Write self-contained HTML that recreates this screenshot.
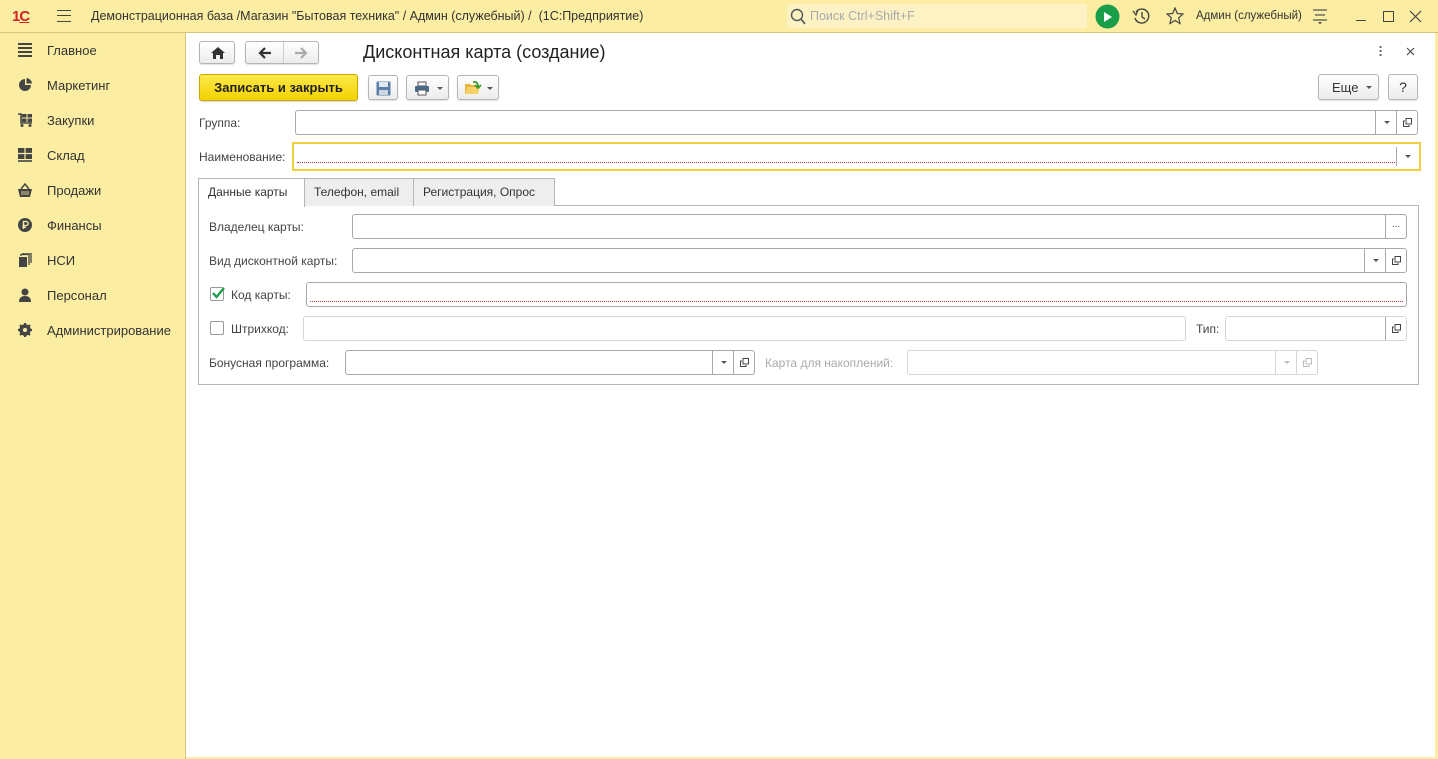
<!DOCTYPE html>
<html><head><meta charset="utf-8">
<style>
*{box-sizing:border-box;margin:0;padding:0}
body{width:1438px;height:759px;overflow:hidden;background:#fff;font-family:"Liberation Sans",Arial,sans-serif;font-size:12px;color:#333;position:relative}
.a{position:absolute}
#top{left:0;top:0;width:1438px;height:33px;background:#fbeda2;border-bottom:1px solid #d8c67c}
#side{left:0;top:33px;width:186px;height:726px;background:#fbeda2;border-right:1px solid #d8c67c}
#rb{left:1435px;top:33px;width:3px;height:726px;background:#fbeda2}
#bb{left:186px;top:757px;width:1252px;height:2px;background:#fbeda2}
.si{position:absolute;left:47px;font-size:13px;color:#333}
.ic{position:absolute;left:18px;width:15px;height:14px}
.btn{position:absolute;border:1px solid #b5b5b5;border-radius:3px;background:linear-gradient(#fff,#ececec);box-shadow:0 1px 1px rgba(0,0,0,.12)}
.fld{position:absolute;border:1px solid #a9a9a9;border-radius:3px;background:#fff}
.fld.dis{border-color:#d5d5d5}
.lbl{position:absolute;font-size:12px;color:#444}
.sb{position:absolute;top:0;bottom:0;border-left:1px solid #a9a9a9;width:21px}
.dis .sb{border-color:#d5d5d5}
.tri{position:absolute;left:8px;top:10px;border-left:3px solid transparent;border-right:3px solid transparent;border-top:3px solid #555}
.cp{position:absolute;left:6px;top:7px;width:9px;height:9px}
.tab{position:absolute;top:178px;height:28px;border:1px solid #b5b5b5;border-bottom:none;background:#eee;font-size:12px;color:#333;padding:6px 9px 0}
.dot{position:absolute;left:3px;right:10px;bottom:5px;border-bottom:1px dotted #a33}
</style></head><body>
<div id="top" class="a"></div>
<div class="a" style="left:12px;top:8px;font:bold 15px 'Liberation Sans';color:#d2232a;letter-spacing:-1px">1<span style="text-decoration:underline">С</span></div>
<div class="a" style="left:57px;top:10px;width:14px;height:12px;border-top:1.5px solid #444;border-bottom:1.5px solid #444"><div style="margin-top:3.5px;border-top:1.5px solid #444"></div></div>
<div class="a" style="left:91px;top:9px;font-size:12.5px;color:#333">Демонстрационная база /Магазин "Бытовая техника" / Админ (служебный) /&nbsp; (1С:Предприятие)</div>
<div class="a" style="left:787px;top:4px;width:300px;height:24px;background:#fcf2c4;border-radius:2px"></div>
<svg class="a" style="left:790px;top:8px" width="16" height="17"><circle cx="7" cy="7" r="5.5" fill="none" stroke="#555" stroke-width="1.4"/><line x1="11" y1="11" x2="15" y2="16" stroke="#555" stroke-width="1.6"/></svg>
<div class="a" style="left:810px;top:9px;font-size:12.5px;color:#aaa">Поиск Ctrl+Shift+F</div>
<svg class="a" style="left:1095px;top:4px" width="25" height="25"><circle cx="12.5" cy="12.5" r="12" fill="#1a9e4a"/><path d="M9 18 L9 8 L17 13 Z" fill="#fff"/></svg>
<svg class="a" style="left:1132px;top:7px" width="18" height="18"><path d="M4 5 A7 7 0 1 1 3 11" fill="none" stroke="#444" stroke-width="1.4"/><path d="M1 4 L4 8 L6 3" fill="none" stroke="#444" stroke-width="1.3"/><path d="M10 5 V10 L13 12" fill="none" stroke="#444" stroke-width="1.4"/></svg>
<svg class="a" style="left:1166px;top:7px" width="18" height="18"><path d="M9 1 L11.3 6.5 L17 7 L12.7 10.8 L14 16.5 L9 13.5 L4 16.5 L5.3 10.8 L1 7 L6.7 6.5 Z" fill="none" stroke="#444" stroke-width="1.2"/></svg>
<div class="a" style="left:1196px;top:10px;font-size:11.5px;color:#333">Админ (служебный)</div>
<svg class="a" style="left:1312px;top:9px" width="16" height="16"><path d="M1 1H15M3 6H13M1 11H15" stroke="#555" stroke-width="1.3"/><path d="M6 13 L10 13 L8 15.5Z" fill="#555"/></svg>
<div class="a" style="left:1356px;top:20px;width:10px;border-top:1.3px solid #444"></div>
<div class="a" style="left:1383px;top:11px;width:11px;height:11px;border:1.4px solid #444"></div>
<svg class="a" style="left:1409px;top:10px" width="13" height="13"><path d="M1 1L12 12M12 1L1 12" stroke="#444" stroke-width="1.2"/></svg>

<div id="side" class="a"></div>
<div id="rb" class="a"></div><div id="bb" class="a"></div>
<!-- sidebar icons -->
<svg class="ic" style="top:43px"><path d="M0 1H14M0 5H14M0 9H14M0 13H14" stroke="#444" stroke-width="2"/></svg>
<svg class="ic" style="top:78px"><path d="M7 1 A6 6 0 1 0 13 7 L7 7Z" fill="#444"/><path d="M8.5 0 A6 6 0 0 1 14 5.5 L8.5 5.5Z" fill="#444"/></svg>
<svg class="ic" style="top:113px"><path d="M0 1H3V10H14" fill="none" stroke="#444" stroke-width="1.6"/><rect x="4" y="1" width="10" height="8" fill="#444"/><path d="M4 5H14M9 1V9" stroke="#fbeda2" stroke-width="1"/><circle cx="4" cy="12.5" r="1.5" fill="#444"/><circle cx="12" cy="12.5" r="1.5" fill="#444"/></svg>
<svg class="ic" style="top:148px"><rect x="0" y="0" width="14" height="11" fill="#444"/><path d="M0 5.5H14M7 0V11" stroke="#fbeda2" stroke-width="1.2"/><path d="M0 13H14" stroke="#444" stroke-width="1.6"/></svg>
<svg class="ic" style="top:183px"><path d="M3 6 L7 1 L11 6" fill="none" stroke="#444" stroke-width="1.5"/><path d="M0 6H14L12 14H2Z" fill="#444"/><path d="M4 8V12M6 8V12M8 8V12M10 8V12" stroke="#fbeda2" stroke-width=".8"/></svg>
<svg class="ic" style="top:218px"><circle cx="7" cy="7" r="7" fill="#444"/><path d="M5.5 11V3.5H8.2A2 2 0 0 1 8.2 7.5H4.5M4.5 9.3H8" fill="none" stroke="#fbeda2" stroke-width="1.3"/></svg>
<svg class="ic" style="top:253px"><rect x="1" y="4" width="8" height="10" fill="#444"/><path d="M3 3V1.5H11V12M5 1V0H13V10" fill="none" stroke="#444" stroke-width="1.3"/></svg>
<svg class="ic" style="top:288px"><circle cx="7" cy="4" r="3.5" fill="#444"/><path d="M1 14 Q1 8 7 8 Q13 8 13 14Z" fill="#444"/></svg>
<svg class="ic" style="top:323px"><g transform="translate(7 7)"><circle r="4.5" fill="none" stroke="#444" stroke-width="2.5"/><path d="M0-7V7M-7 0H7M-5-5L5 5M-5 5L5-5" stroke="#444" stroke-width="2.2"/><circle r="2" fill="#fbeda2"/></g></svg>
<div class="si" style="top:43px">Главное</div>
<div class="si" style="top:78px">Маркетинг</div>
<div class="si" style="top:113px">Закупки</div>
<div class="si" style="top:148px">Склад</div>
<div class="si" style="top:183px">Продажи</div>
<div class="si" style="top:218px">Финансы</div>
<div class="si" style="top:253px">НСИ</div>
<div class="si" style="top:288px">Персонал</div>
<div class="si" style="top:323px">Администрирование</div>

<!-- header row -->
<div class="btn" style="left:199px;top:41px;width:36px;height:23px"><svg style="position:absolute;left:11px;top:5px" width="14" height="12"><path d="M7 0L14 6H12V12H9V8H5V12H2V6H0Z" fill="#333"/></svg></div>
<div class="btn" style="left:245px;top:41px;width:74px;height:23px"><div style="position:absolute;left:37px;top:0;bottom:0;border-left:1px solid #ccc"></div>
<svg style="position:absolute;left:12px;top:5px" width="14" height="12"><path d="M13 6H3M7 1L2 6L7 11" fill="none" stroke="#333" stroke-width="2.2"/></svg>
<svg style="position:absolute;left:48px;top:5px" width="14" height="12"><path d="M1 6H11M7 1L12 6L7 11" fill="none" stroke="#aaa" stroke-width="2.2"/></svg></div>
<div class="a" style="left:363px;top:42px;font-size:18px;color:#222">Дисконтная карта (создание)</div>
<div class="a" style="left:1379px;top:45px;width:3px;height:12px;background:radial-gradient(circle,#666 1px,transparent 1.3px) 0 0/3px 4px"></div>
<svg class="a" style="left:1406px;top:47px" width="9" height="9"><path d="M1 1L8 8M8 1L1 8" stroke="#444" stroke-width="1.1"/></svg>

<div class="a" style="left:199px;top:74px;width:159px;height:27px;border:1px solid #c9a800;border-radius:3px;background:linear-gradient(#fde94a,#f3d200);font-weight:bold;font-size:13px;color:#222;text-align:center;line-height:25px;box-shadow:0 1px 1px rgba(0,0,0,.15)">Записать и закрыть</div>
<div class="btn" style="left:368px;top:75px;width:30px;height:25px"><svg style="position:absolute;left:7px;top:5px" width="15" height="15"><rect x="0.5" y="0.5" width="14" height="14" rx="1" fill="#5b7fa6"/><rect x="3" y="1" width="9" height="5" fill="#dfe7ef"/><rect x="3" y="9" width="9" height="5" fill="#cbd6e2"/></svg></div>
<div class="btn" style="left:406px;top:75px;width:43px;height:25px"><svg style="position:absolute;left:7px;top:5px" width="16" height="15"><rect x="4" y="1" width="8" height="4" fill="none" stroke="#555"/><rect x="1" y="5" width="14" height="6" rx="1" fill="#4a6b8e"/><rect x="4" y="9" width="8" height="5" fill="#fff" stroke="#555"/></svg><div class="tri" style="left:30px;top:11px"></div></div>
<div class="btn" style="left:457px;top:75px;width:42px;height:25px"><svg style="position:absolute;left:6px;top:4px" width="18" height="16"><path d="M1 4H6L7 5H14V14H1Z" fill="#e8b43a"/><path d="M3 7H16L14 14H1Z" fill="#f6d168"/><path d="M9 2Q14 1 14 7M11 5L14 8L17 5" fill="none" stroke="#3a9a2a" stroke-width="1.8"/></svg><div class="tri" style="left:29px;top:11px"></div></div>
<div class="btn" style="left:1318px;top:74px;width:61px;height:26px;font-size:13px;color:#333"><span style="position:absolute;left:13px;top:5px">Еще</span><div class="tri" style="left:47px;top:11px"></div></div>
<div class="btn" style="left:1388px;top:74px;width:30px;height:26px;font-size:14px;color:#333;text-align:center;line-height:24px">?</div>

<!-- Группа -->
<div class="lbl" style="left:199px;top:116px">Группа:</div>
<div class="fld" style="left:295px;top:110px;width:1123px;height:25px"><div class="sb" style="right:21px"><div class="tri"></div></div><div class="sb" style="right:0"><svg class="cp"><rect x="3" y="0.5" width="5.5" height="5.5" fill="none" stroke="#444"/><path d="M2 3H0.5V8.5H6V7" fill="none" stroke="#444"/></svg></div></div>
<div class="lbl" style="left:199px;top:150px">Наименование:</div>
<div class="a" style="left:292px;top:142px;width:1129px;height:29px;border:2px solid #f0d040;background:#fff"><div class="dot" style="right:24px;bottom:6px"></div><div style="position:absolute;right:22px;top:3px;bottom:3px;border-left:1px solid #a9a9a9"></div><div class="tri" style="left:auto;right:8px;top:11px"></div></div>

<!-- tabs -->
<div class="a" style="left:198px;top:205px;width:1221px;height:180px;border:1px solid #b5b5b5"></div>
<div class="tab" style="left:304px;width:110px">Телефон, email</div>
<div class="tab" style="left:413px;width:142px">Регистрация, Опрос</div>
<div class="tab" style="left:198px;width:107px;height:29px;background:#fff">Данные карты</div>

<div class="lbl" style="left:209px;top:220px">Владелец карты:</div>
<div class="fld" style="left:352px;top:214px;width:1055px;height:25px"><div class="sb" style="right:0"><span style="position:absolute;left:6px;top:4px;font-size:10px;color:#555">...</span></div></div>
<div class="lbl" style="left:209px;top:254px">Вид дисконтной карты:</div>
<div class="fld" style="left:352px;top:248px;width:1055px;height:25px"><div class="sb" style="right:21px"><div class="tri"></div></div><div class="sb" style="right:0"><svg class="cp"><rect x="3" y="0.5" width="5.5" height="5.5" fill="none" stroke="#444"/><path d="M2 3H0.5V8.5H6V7" fill="none" stroke="#444"/></svg></div></div>

<div class="a" style="left:210px;top:287px;width:14px;height:14px;border:1px solid #999;border-radius:2px;background:#fff"><svg style="position:absolute;left:0;top:-2px" width="15" height="15"><path d="M2 7L5.5 11L13 2" fill="none" stroke="#1a9e4a" stroke-width="2.3"/></svg></div>
<div class="lbl" style="left:231px;top:288px">Код карты:</div>
<div class="fld" style="left:306px;top:282px;width:1101px;height:25px"><div class="dot" style="right:3px;bottom:4px"></div></div>

<div class="a" style="left:210px;top:321px;width:14px;height:14px;border:1px solid #999;border-radius:2px;background:#fff"></div>
<div class="lbl" style="left:231px;top:322px">Штрихкод:</div>
<div class="fld dis" style="left:303px;top:316px;width:883px;height:25px"></div>
<div class="lbl" style="left:1196px;top:322px">Тип:</div>
<div class="fld dis" style="left:1225px;top:316px;width:182px;height:25px"><div class="sb" style="right:0;border-color:#a9a9a9"><svg class="cp"><rect x="3" y="0.5" width="5.5" height="5.5" fill="none" stroke="#444"/><path d="M2 3H0.5V8.5H6V7" fill="none" stroke="#444"/></svg></div></div>

<div class="lbl" style="left:209px;top:356px">Бонусная программа:</div>
<div class="fld" style="left:345px;top:350px;width:410px;height:25px"><div class="sb" style="right:21px"><div class="tri"></div></div><div class="sb" style="right:0"><svg class="cp"><rect x="3" y="0.5" width="5.5" height="5.5" fill="none" stroke="#444"/><path d="M2 3H0.5V8.5H6V7" fill="none" stroke="#444"/></svg></div></div>
<div class="lbl" style="left:765px;top:356px;color:#aaa">Карта для накоплений:</div>
<div class="fld dis" style="left:907px;top:350px;width:411px;height:25px"><div class="sb" style="right:21px"><div class="tri" style="border-top-color:#bbb"></div></div><div class="sb" style="right:0"><svg class="cp"><rect x="3" y="0.5" width="5.5" height="5.5" fill="none" stroke="#bbb"/><path d="M2 3H0.5V8.5H6V7" fill="none" stroke="#bbb"/></svg></div></div>
</body></html>
